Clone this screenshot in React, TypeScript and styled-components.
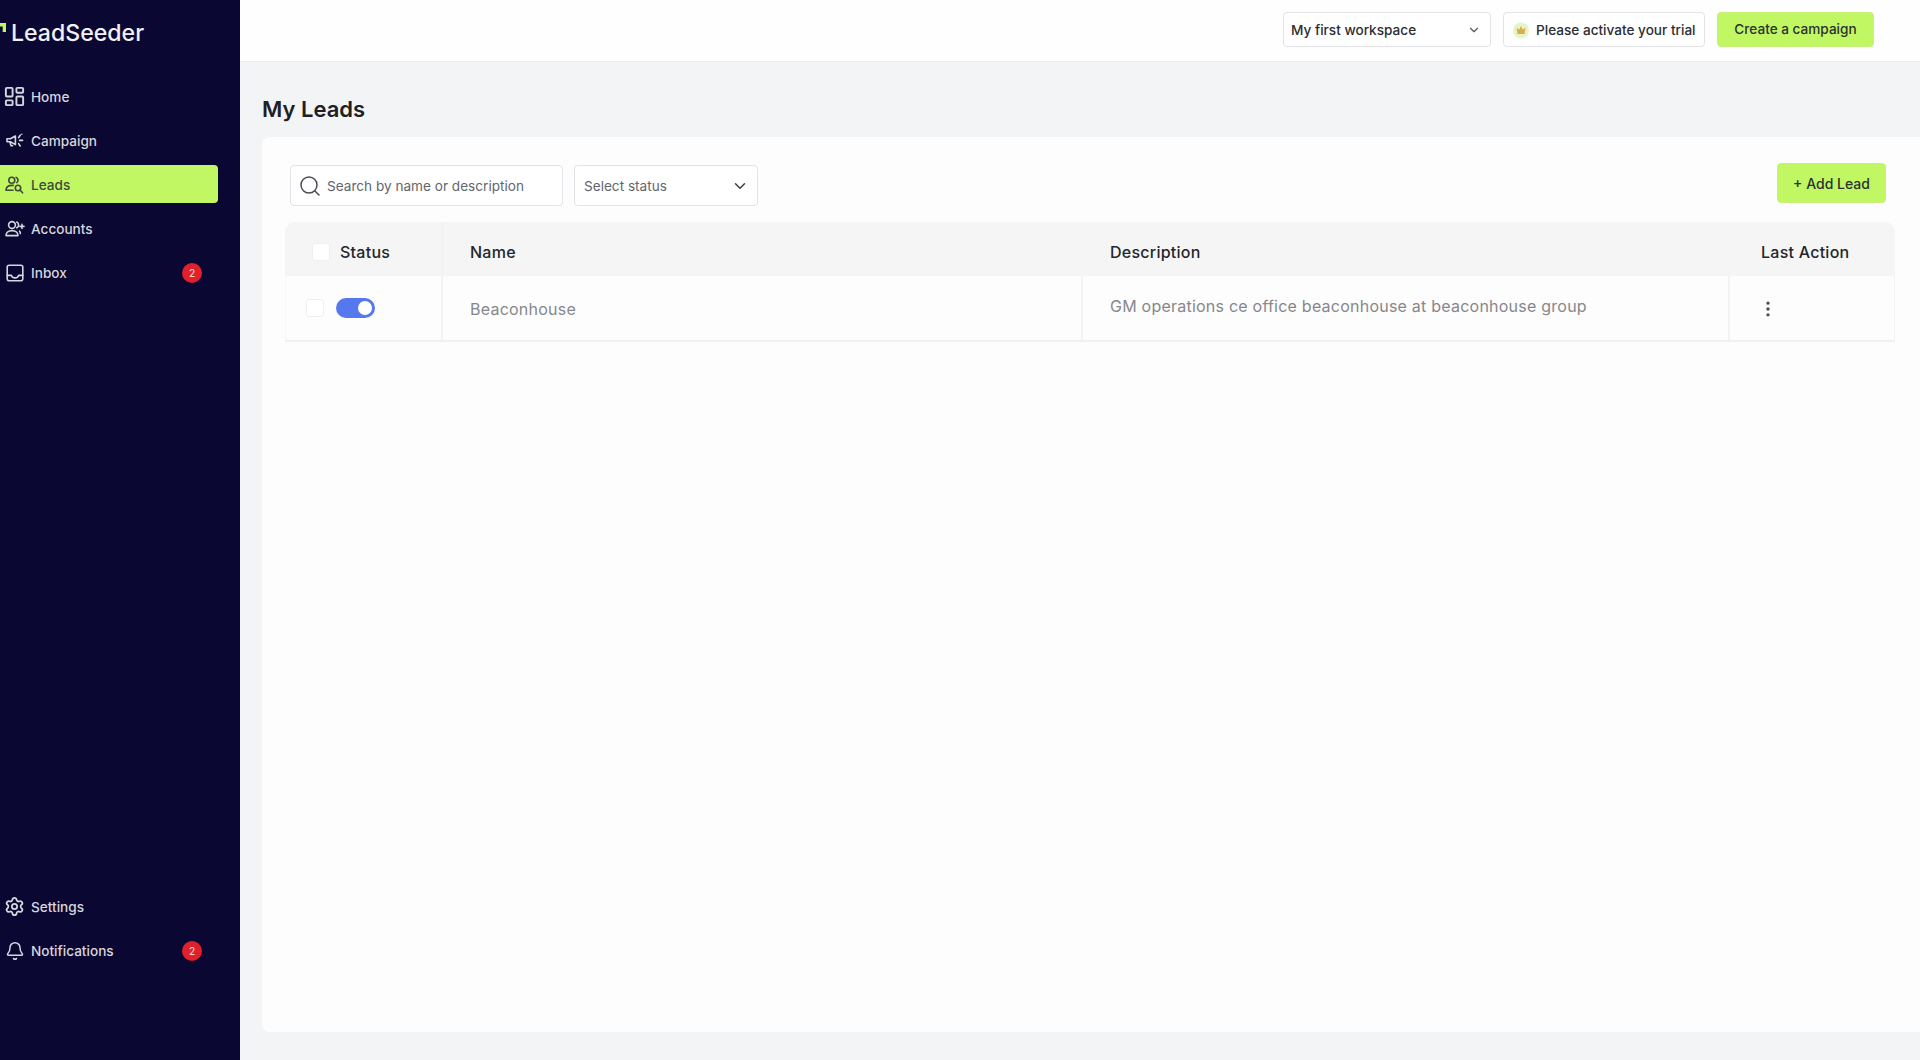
import { ReactNode } from "react";
import styled, { createGlobalStyle } from "styled-components";
import { Bell, ChevronDown, LayoutDashboard, MoreVertical, Search, Settings } from "lucide-react";

const Global = createGlobalStyle`
  html, body { margin: 0; padding: 0; height: 100%; }
  body { font-family: Inter, "Liberation Sans", sans-serif; background: #f3f4f5; overflow: hidden; }
  * { box-sizing: border-box; }
`;

const Shell = styled.div`
  display: flex;
  width: 1920px;
  height: 1060px;
`;

const Sidebar = styled.aside`
  width: 240px;
  flex: none;
  background: #0b0733;
  display: flex;
  flex-direction: column;
`;

const Logo = styled.div`
  height: 68px;
  padding: 19px 0 0 11px;
  position: relative;
  color: #f1f1f3;
  font-size: 23.1px;
  font-weight: 500;
  line-height: 29px;
`;

const LogoMark = styled.span`
  position: absolute;
  left: 0;
  top: 23px;
  width: 6px;
  height: 9px;
  background: #c0f763;
  clip-path: polygon(0 0, 100% 0, 100% 100%, 45% 100%, 45% 40%, 0 40%);
`;

const NavList = styled.nav`
  display: flex;
  flex-direction: column;
  gap: 6px;
  padding-top: 9px;
  flex: 1;
`;

const NavItem = styled.div<{ $active?: boolean }>`
  width: 218px;
  height: 38px;
  display: flex;
  align-items: center;
  gap: 4px;
  padding: 1px 16px 0 2px;
  border-radius: 0 4px 4px 0;
  font-size: 13.6px;
  font-weight: 500;
  background: ${({ $active }) => ($active ? "#c0f763" : "transparent")};
  color: ${({ $active }) => ($active ? "#3d4a3c" : "#d6d6dc")};
`;

const NavIcon = styled.span`
  width: 25px;
  height: 24px;
  flex: none;
  display: flex;
  align-items: center;
  justify-content: center;
`;

const NavLabel = styled.span`
  flex: 1;
`;

const Badge = styled.span`
  width: 20px;
  height: 20px;
  border-radius: 50%;
  background: #e0202a;
  color: #f6d0d0;
  font-size: 10px;
  display: flex;
  align-items: center;
  justify-content: center;
`;

const BottomNav = styled(NavList)`
  flex: none;
  padding: 0 0 91px;
`;

const Main = styled.main`
  flex: 1;
  min-width: 0;
  display: flex;
  flex-direction: column;
`;

const TopBar = styled.header`
  height: 62px;
  flex: none;
  background: #fefefe;
  border-bottom: 1px solid #ececee;
  display: flex;
  justify-content: flex-end;
  align-items: flex-start;
  gap: 12px;
  padding: 12px 46px 0 0;
`;

const Outlined = styled.div`
  height: 35px;
  background: #fff;
  border: 1px solid #e2e3e6;
  border-radius: 4px;
  display: flex;
  align-items: center;
  font-size: 13.6px;
  font-weight: 500;
  color: #2c2d33;
`;

const Workspace = styled(Outlined)`
  width: 208px;
  justify-content: space-between;
  padding: 1px 9px 0 7px;
`;

const Trial = styled(Outlined)`
  width: 202px;
  gap: 6px;
  padding: 1px 7px 0 8px;
  white-space: nowrap;
  svg { flex: none; }
`;

const GreenButton = styled.button`
  border: 1px solid #c6f27a;
  border-radius: 4px;
  background: #c0f763;
  color: #2b3130;
  font-family: inherit;
  font-size: 13.6px;
  font-weight: 500;
  padding: 0;
`;

const CreateButton = styled(GreenButton)`
  width: 157px;
  height: 35px;
  padding-bottom: 2px;
`;

const Content = styled.div`
  flex: 1;
  padding: 0 0 28px 22px;
  display: flex;
  flex-direction: column;
`;

const Title = styled.h1`
  margin: 0;
  height: 75px;
  padding-top: 33px;
  font-size: 22px;
  font-weight: 600;
  line-height: 28px;
  color: #1e2024;
`;

const Card = styled.section`
  flex: 1;
  background: #fdfdfd;
  border-radius: 8px 0 0 8px;
  padding: 26px 25px 0 23px;
`;

const Toolbar = styled.div`
  display: flex;
  align-items: flex-start;
  gap: 11px;
  padding: 2px 9px 0 5px;
  height: 59px;
`;

const SearchBox = styled(Outlined)`
  width: 273px;
  height: 41px;
  gap: 5px;
  padding: 0 7px;
  color: #63666c;
  font-weight: 400;
`;

const StatusSelect = styled(Outlined)`
  width: 184px;
  height: 41px;
  justify-content: space-between;
  padding: 0 8px 0 9px;
  color: #63666c;
  font-weight: 400;
`;

const AddButton = styled(GreenButton)`
  margin-left: auto;
  width: 109px;
  height: 40px;
  margin-top: -2px;
  font-size: 14px;
`;

const Table = styled.div`
  display: grid;
  grid-template-columns: 158px 640px 647px 165px;
  border-bottom: 2px solid #f1f1f2;
`;

const HeadCell = styled.div`
  height: 54px;
  padding: 6px 0 0 27px;
  background: #f5f5f5;
  display: flex;
  align-items: center;
  font-size: 16px;
  font-weight: 500;
  letter-spacing: 0.25px;
  color: #24262a;
`;

const StatusHead = styled(HeadCell)`
  border-top-left-radius: 10px;
  border-right: 1px solid #f0f0f0;
  gap: 10px;
`;

const ActionHead = styled(HeadCell)`
  border-top-right-radius: 10px;
  padding-left: 31px;
`;

const RowCell = styled.div`
  height: 64px;
  display: flex;
  align-items: center;
  padding: 2px 0 0 27px;
  font-size: 16px;
  letter-spacing: 0.23px;
  color: #85878c;
  border-right: 2px solid #f3f3f4;
`;

const StatusCell = styled(RowCell)`
  padding: 0 0 0 20px;
  gap: 12px;
  border-left: 1px solid #f6f6f6;
`;

const ActionCell = styled(RowCell)`
  border-right: 1px solid #f3f3f4;
  padding-left: 28px;
  color: #4a4c52;
`;

const DescText = styled.span`
  margin-top: -6px;
`;

const Check = styled.span`
  width: 18px;
  height: 18px;
  background: #fff;
  border: 1px solid #efeff0;
  border-radius: 3px;
`;

const Toggle = styled.span`
  width: 39px;
  height: 20px;
  border-radius: 10px;
  background: #5578ee;
  position: relative;
  &::after {
    content: "";
    position: absolute;
    right: 3px;
    top: 3px;
    width: 14px;
    height: 14px;
    border-radius: 50%;
    background: #fff;
  }
`;

const MegaphoneIcon = () => (
  <svg width="18" height="18" viewBox="0 0 18 18" fill="none" stroke="currentColor" strokeWidth="1.6" strokeLinecap="round" strokeLinejoin="round">
    <path d="M1 6.8h3.4l5-2.8v8.6l-5-2.8H1z" />
    <path d="M4 10l1 3.8h1.6" />
    <path d="M12.6 5.6l1.6-2.4M13.6 8.4h3M12.6 11.6l1.6 2.4M15.8 2.2v.1" />
  </svg>
);

const LeadsIcon = () => (
  <svg width="19" height="18" viewBox="0 0 19 18" fill="none" stroke="currentColor" strokeWidth="1.6" strokeLinecap="round" strokeLinejoin="round">
    <circle cx="6.8" cy="4.2" r="3" />
    <path d="M1 14.2c0-3 2.4-4.8 6.2-4.8h1M1 14.2h7" />
    <path d="M11.2 1.4a3 3 0 0 1 .6 5.2" />
    <circle cx="13" cy="12" r="2.7" />
    <path d="M15 14l2.6 2.8" />
  </svg>
);

const AccountsIcon = () => (
  <svg width="20" height="18" viewBox="0 0 20 18" fill="none" stroke="currentColor" strokeWidth="1.6" strokeLinecap="round" strokeLinejoin="round">
    <circle cx="7" cy="5" r="3.4" />
    <path d="M1 15.6c0-3 2.6-5 6-5s6 2 6 5z" />
    <path d="M11.8 2a3.2 3.2 0 0 1 0 5.8M14.6 11.2c.5.6.8 1.4.8 2.4M17 4.4v4M15 6.4h4" />
  </svg>
);

const InboxIcon = () => (
  <svg width="18" height="18" viewBox="0 0 18 18" fill="none" stroke="currentColor" strokeWidth="1.6" strokeLinecap="round" strokeLinejoin="round">
    <rect x="1.2" y="1.2" width="15.6" height="15.6" rx="2" />
    <path d="M1.2 11.4h4.2c.5 1.6 1.9 2.5 3.6 2.5s3.1-.9 3.6-2.5h4.2" />
  </svg>
);

const CrownIcon = () => (
  <svg width="18" height="18" viewBox="0 0 18 18">
    <circle cx="9" cy="9.5" r="8" fill="#e6f4c8" />
    <path d="M4.5 6.5l2.6 2.2L9 5l1.9 3.7 2.6-2.2-1 6.5h-7z" fill="#d9ad4f" />
  </svg>
);

type Item = { label: string; icon: ReactNode; active?: boolean; badge?: number };

const mainItems: Item[] = [
  { label: "Home", icon: <LayoutDashboard size={23} strokeWidth={2} /> },
  { label: "Campaign", icon: <MegaphoneIcon /> },
  { label: "Leads", icon: <LeadsIcon />, active: true },
  { label: "Accounts", icon: <AccountsIcon /> },
  { label: "Inbox", icon: <InboxIcon />, badge: 2 },
];

const bottomItems: Item[] = [
  { label: "Settings", icon: <Settings size={21} strokeWidth={2} /> },
  { label: "Notifications", icon: <Bell size={20} strokeWidth={1.8} />, badge: 2 },
];

const renderItem = (item: Item) => (
  <NavItem key={item.label} $active={item.active}>
    <NavIcon>{item.icon}</NavIcon>
    <NavLabel>{item.label}</NavLabel>
    {item.badge ? <Badge>{item.badge}</Badge> : null}
  </NavItem>
);

export default function App() {
  return (
    <Shell>
      <Global />
      <Sidebar>
        <Logo>
          <LogoMark />
          LeadSeeder
        </Logo>
        <NavList>{mainItems.map(renderItem)}</NavList>
        <BottomNav>{bottomItems.map(renderItem)}</BottomNav>
      </Sidebar>
      <Main>
        <TopBar>
          <Workspace>
            My first workspace
            <ChevronDown size={14} color="#55575c" />
          </Workspace>
          <Trial>
            <CrownIcon />
            Please activate your trial
          </Trial>
          <CreateButton>Create a campaign</CreateButton>
        </TopBar>
        <Content>
          <Title>My Leads</Title>
          <Card>
            <Toolbar>
              <SearchBox>
                <Search size={24} strokeWidth={1.5} color="#4a4c52" />
                Search by name or description
              </SearchBox>
              <StatusSelect>
                Select status
                <ChevronDown size={18} color="#3c3e44" />
              </StatusSelect>
              <AddButton>+ Add Lead</AddButton>
            </Toolbar>
            <Table>
              <StatusHead>
                <Check />
                Status
              </StatusHead>
              <HeadCell>Name</HeadCell>
              <HeadCell>Description</HeadCell>
              <ActionHead>Last Action</ActionHead>
              <StatusCell>
                <Check />
                <Toggle />
              </StatusCell>
              <RowCell>Beaconhouse</RowCell>
              <RowCell>
                <DescText>GM operations ce office beaconhouse at beaconhouse group</DescText>
              </RowCell>
              <ActionCell>
                <MoreVertical size={20} />
              </ActionCell>
            </Table>
          </Card>
        </Content>
      </Main>
    </Shell>
  );
}
